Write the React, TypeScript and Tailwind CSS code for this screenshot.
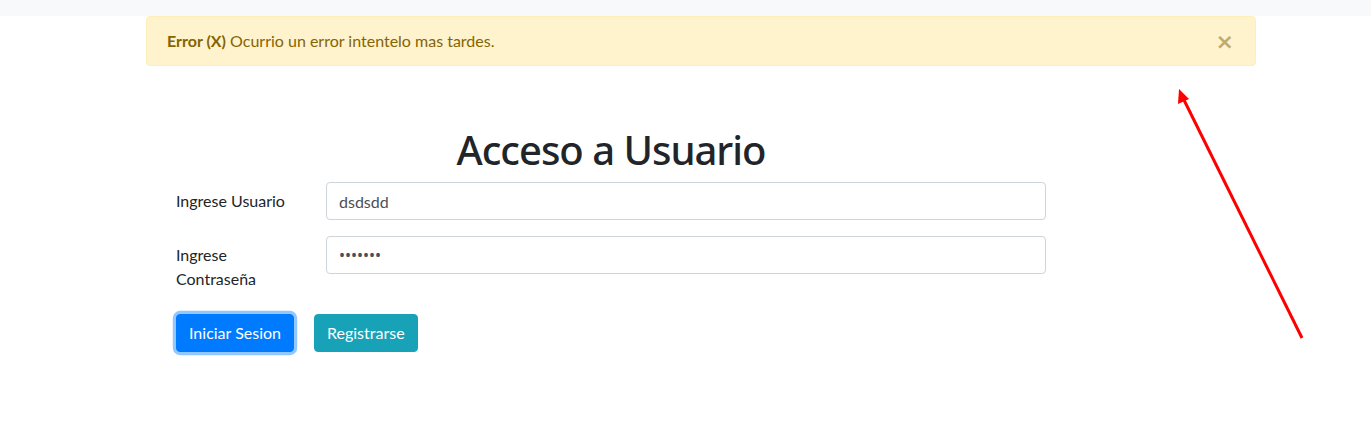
import { useState } from "react"

export default function App() {
    const [user, setUser] = useState("dsdsdd")
    const [pass, setPass] = useState("1234567")
    const [showAlert, setShowAlert] = useState(true)

    return (
        <div className="relative min-h-[433px] bg-white text-[16px] leading-6 text-[#212529] font-['Lato',sans-serif]">
            <div className="h-4 bg-[#f8f9fa]" />

            <div className="ml-[146px] w-[1110px]">
                {showAlert && (
                    <div className="relative flex h-[50px] items-center rounded border border-[#ffeeba] bg-[#fff3cd] px-5 text-[#856404]">
                        <span><strong className="font-bold">Error (X)</strong> Ocurrio un error intentelo mas tardes.</span>
                        <button
                            type="button"
                            onClick={() => setShowAlert(false)}
                            className="absolute right-0 top-0 h-full pl-5 pr-[21px] pt-[2px] text-[22px] font-bold leading-none text-[#c0aa72] font-['DejaVu_Sans',sans-serif]"
                        >
                            ×
                        </button>
                    </div>
                )}
            </div>

            <div className="ml-[176px] mt-[60px] w-[870px]">
                <h1 className="mb-2 text-center text-[40px] font-medium leading-[48px] tracking-[-1px] font-['Noto_Sans',sans-serif]">Acceso a Usuario</h1>

                <div className="mb-4 flex">
                    <label className="w-[150px] py-[7px]">Ingrese Usuario</label>
                    <input
                        type="text"
                        value={user}
                        onChange={e => setUser(e.target.value)}
                        className="h-[38px] flex-1 rounded border border-[#ced4da] px-3 text-[#495057] outline-none"
                    />
                </div>

                <div className="mb-4 flex items-start">
                    <label className="w-[150px] py-[7px] pr-[60px]">Ingrese Contraseña</label>
                    <input
                        type="password"
                        value={pass}
                        onChange={e => setPass(e.target.value)}
                        className="h-[38px] flex-1 rounded border border-[#ced4da] px-3 text-[#495057] outline-none font-['Noto_Sans',sans-serif]"
                    />
                </div>

                <div className="flex gap-5">
                    <button type="button" className="h-[38px] rounded border border-[#007bff] bg-[#007bff] px-3 text-white shadow-[0_0_0_3.2px_rgba(38,143,255,0.5)]">
                        Iniciar Sesion
                    </button>
                    <button type="button" className="h-[38px] rounded border border-[#17a2b8] bg-[#17a2b8] px-3 text-white">
                        Registrarse
                    </button>
                </div>
            </div>

            <svg className="pointer-events-none absolute left-0 top-0" width="1371" height="433">
                <line x1="1302" y1="338" x2="1184" y2="100" stroke="#ff0000" strokeWidth="3" />
                <polygon points="1179,89 1178,104 1189,99" fill="#ff0000" />
            </svg>
        </div>
    )
}
